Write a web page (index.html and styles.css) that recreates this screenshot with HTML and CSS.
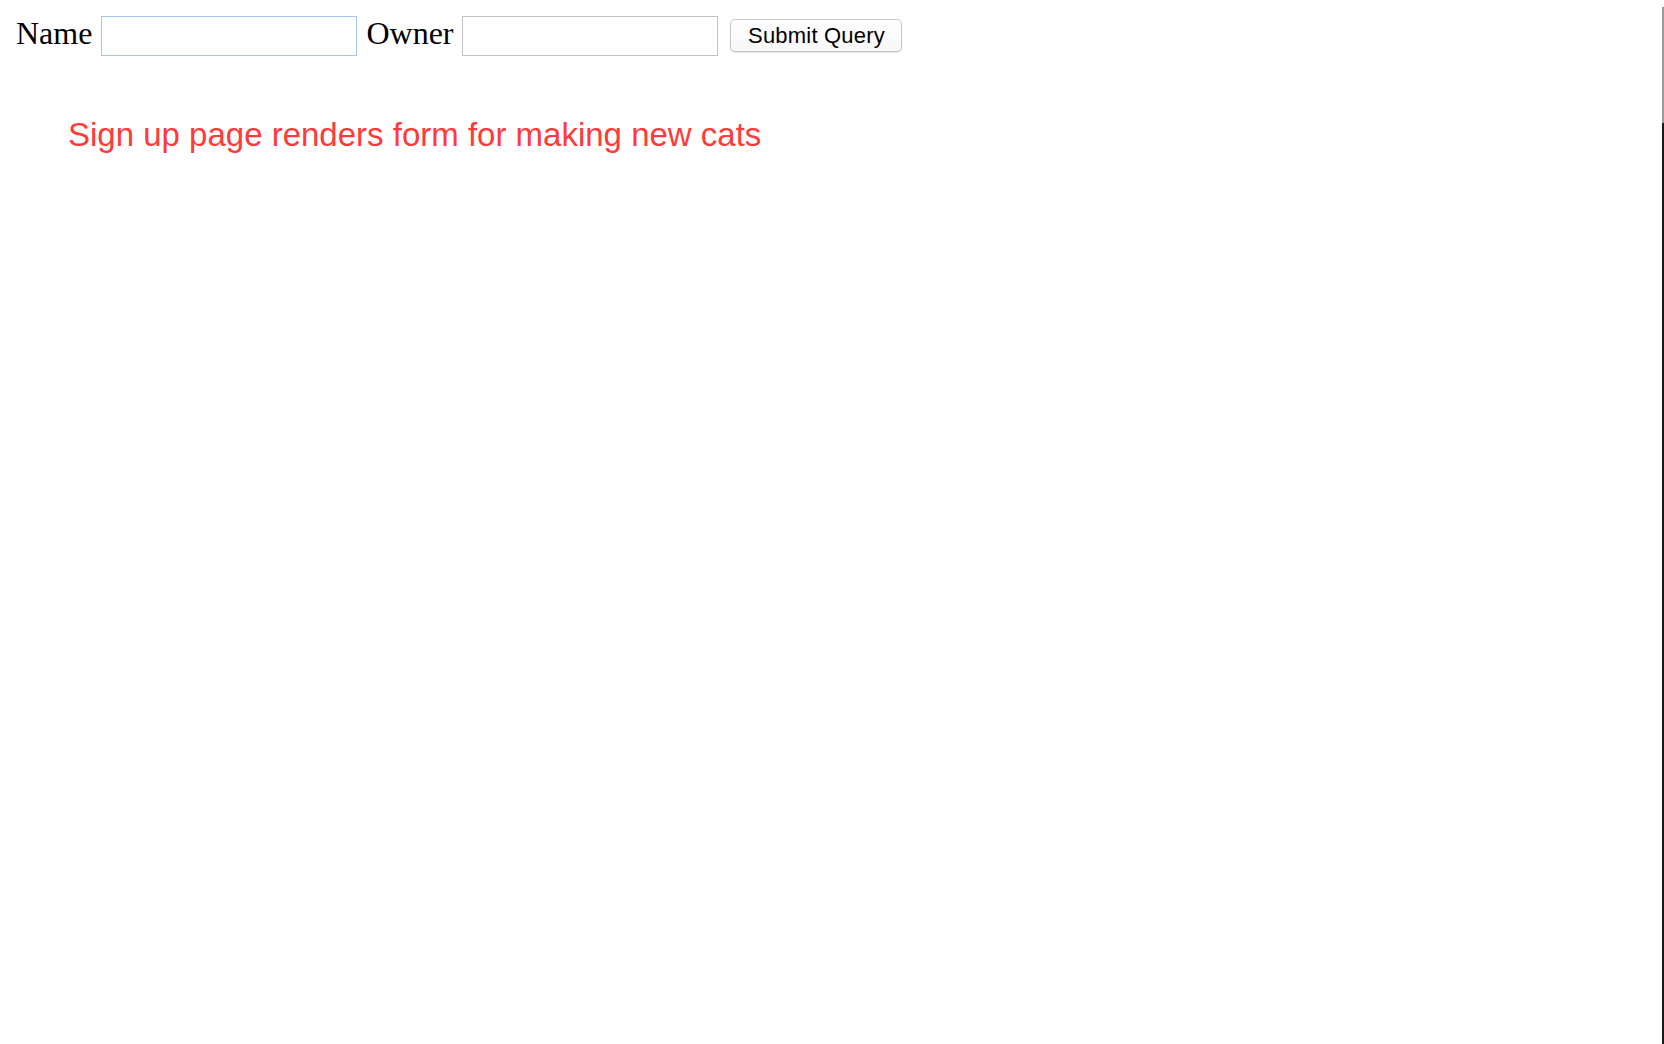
FILE: index.html
```html
<!DOCTYPE html>
<html>
<head>
<meta charset="utf-8">
<title>Sign up</title>
<link rel="stylesheet" href="styles.css">
</head>
<body>
<form class="cat-form">
  <label class="field-label" for="name">Name</label>
  <input class="field-input field-input--focused" id="name" type="text">
  <label class="field-label field-label--second" for="owner">Owner</label>
  <input class="field-input" id="owner" type="text">
  <button class="submit-btn" type="button">Submit Query</button>
</form>
<p class="notice">Sign up page renders form for making new cats</p>
</body>
</html>
```

FILE: styles.css
```css
html, body {
  margin: 0;
  padding: 0;
  background: #ffffff;
}

body {
  min-height: 1044px;
}

body::after {
  content: "";
  position: fixed;
  top: 0;
  right: 0;
  width: 2px;
  height: 100%;
  background: linear-gradient(to bottom, #ffffff 0, #ffffff 7px, #9a9a9a 7px, #9a9a9a 123px, #1c1c1c 123px, #1c1c1c 100%);
}

.cat-form {
  display: flex;
  align-items: center;
  padding: 15px 0 0 15px;
  margin: 0;
}

.field-label {
  font-family: "Liberation Serif", "Times New Roman", serif;
  font-size: 32px;
  line-height: 37px;
  color: #000000;
  margin: 0 9px 4px 1px;
}

.field-label--second {
  margin-left: 9px;
  margin-right: 9px;
}

.field-input {
  box-sizing: border-box;
  width: 256px;
  height: 40px;
  margin: 0;
  padding: 0 4px;
  border: 1px solid #c2c2c2;
  border-radius: 0;
  background: #ffffff;
  font-family: "Liberation Sans", Arial, sans-serif;
  font-size: 18px;
  outline: none;
}

.field-input--focused {
  border-color: #a3c6ea;
}

.submit-btn {
  box-sizing: border-box;
  width: 172px;
  height: 33px;
  margin: 0 0 0 12px;
  padding: 0;
  border: 1px solid #c6c6c6;
  border-radius: 5px;
  background: linear-gradient(to bottom, #ffffff, #f7f7f7);
  box-shadow: 0 1px 1px rgba(0, 0, 0, 0.12);
  font-family: "Liberation Sans", Arial, sans-serif;
  font-size: 22px;
  line-height: 31px;
  letter-spacing: 0.2px;
  color: #000000;
}

.notice {
  margin: 60px 0 0 68px;
  font-family: "Liberation Sans", Arial, Helvetica, sans-serif;
  font-size: 33px;
  line-height: 38px;
  color: #ff3a3a;
}
```
